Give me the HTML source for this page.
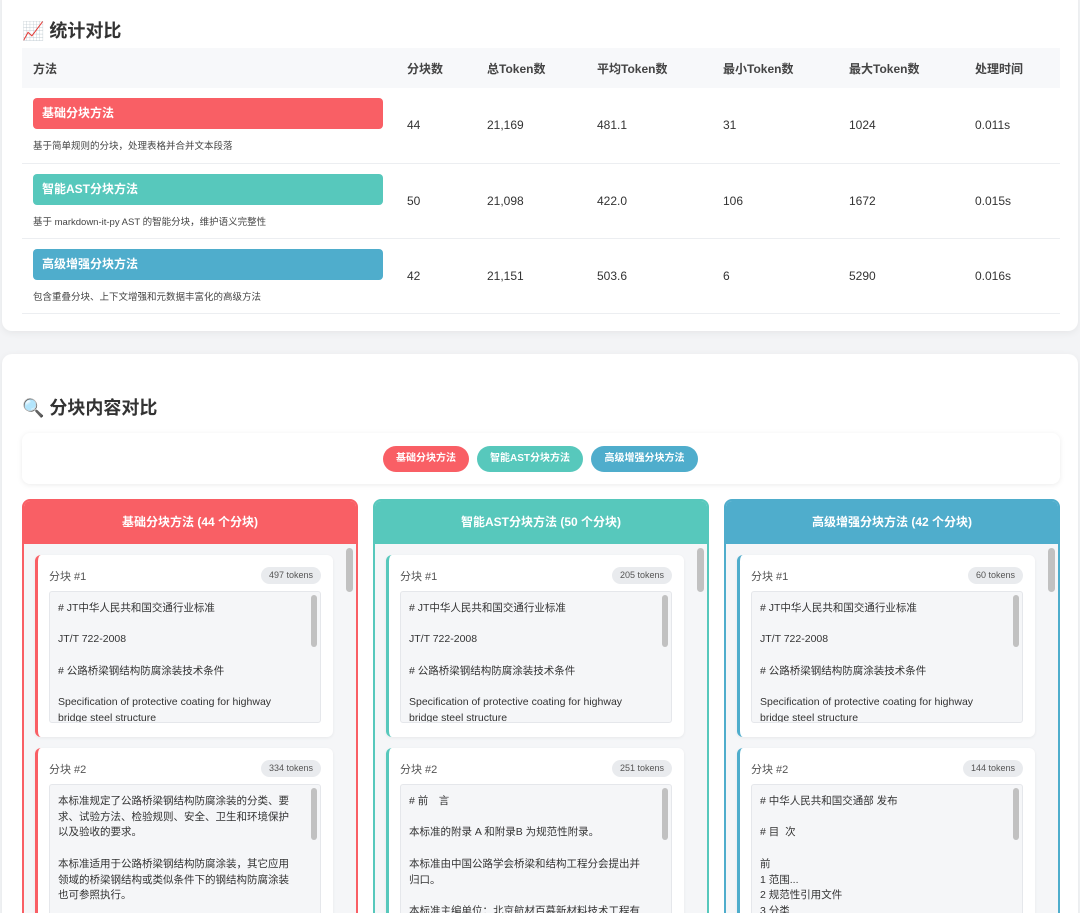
<!DOCTYPE html>
<html><head><meta charset="utf-8"><style>
*{box-sizing:border-box;margin:0;padding:0}
html,body{width:1080px;height:913px;overflow:hidden}
body{background:#f3f4f6;font-family:"Liberation Sans","Noto Sans CJK SC",sans-serif;color:#333;position:relative}
.card{position:absolute;left:2px;width:1076px;background:#fff;border-radius:10px;box-shadow:0 2px 8px rgba(0,0,0,.06)}
h2{position:absolute;left:20px;font-size:18px;font-weight:bold;color:#333}
table{position:absolute;left:20px;top:58px;width:1038px;border-collapse:collapse;font-size:12px}
th{background:#f7f8fa;height:40px;text-align:left;font-weight:bold;color:#444;padding-left:11px}
td{height:75px;border-bottom:1px solid #eceef1;padding-left:11px;color:#333}
td.m{padding-top:10px;vertical-align:top}
.b{width:350px;height:31px;border-radius:4px;color:#fff;font-weight:bold;font-size:12px;line-height:31px;padding-left:9px}
.d{font-size:9.5px;color:#444;margin-top:9px}
.pills{position:absolute;left:20px;top:79px;width:1038px;height:51px;background:#fff;border-radius:8px;box-shadow:0 1px 6px rgba(0,0,0,.08)}
.pill{position:absolute;top:13px;height:26px;border-radius:13px;color:#fff;font-size:10px;font-weight:bold;line-height:26px;text-align:center}
.col{position:absolute;top:145px;width:336px;height:520px;border:2px solid;border-radius:8px;background:#f5f6f8;overflow:hidden}
.ch{height:43px;color:#fff;font-weight:bold;font-size:12px;text-align:center;line-height:43px}
.sb{position:absolute;right:3px;top:47px;width:7px;height:44px;background:#c1c1c1;border-radius:4px}
.k{position:absolute;left:11px;width:298px;height:182px;background:#fff;border-radius:6px;border-left:3px solid;box-shadow:0 1px 3px rgba(0,0,0,.06)}
.kt{position:absolute;left:11px;top:13px;font-size:11px;color:#555}
.tk{position:absolute;right:12px;top:12px;height:17px;padding:0 8px;background:#e9ebee;border-radius:9px;font-size:9px;line-height:17px;color:#555}
.bx{position:absolute;left:11px;top:36px;width:272px;height:132px;background:#f5f6f8;border:1px solid #e5e7eb;border-radius:3px;overflow:hidden;font-size:10.5px;line-height:15.7px;color:#333;padding:9px 22px 0 8px;white-space:pre-wrap}
.bx:after{content:"";position:absolute;right:3px;top:3px;width:6px;height:52px;background:#c1c1c1;border-radius:3px}
</style></head><body>
<div class="card" style="top:-10px;height:341px">
<h2 style="top:27px">📈 统计对比</h2>
<table><tr><th style="width:374px">方法</th><th style="width:80px">分块数</th><th style="width:110px">总Token数</th><th style="width:126px">平均Token数</th><th style="width:126px">最小Token数</th><th style="width:126px">最大Token数</th><th>处理时间</th></tr>
<tr><td class="m"><div class="b" style="background:#f95f65">基础分块方法</div><div class="d">基于简单规则的分块，处理表格并合并文本段落</div></td><td>44</td><td>21,169</td><td>481.1</td><td>31</td><td>1024</td><td>0.011s</td></tr>
<tr><td class="m"><div class="b" style="background:#57c8bc">智能AST分块方法</div><div class="d">基于 markdown-it-py AST 的智能分块，维护语义完整性</div></td><td>50</td><td>21,098</td><td>422.0</td><td>106</td><td>1672</td><td>0.015s</td></tr>
<tr><td class="m"><div class="b" style="background:#4fadcc">高级增强分块方法</div><div class="d">包含重叠分块、上下文增强和元数据丰富化的高级方法</div></td><td>42</td><td>21,151</td><td>503.6</td><td>6</td><td>5290</td><td>0.016s</td></tr>
</table></div>
<div class="card" style="top:354px;height:700px">
<h2 style="top:40px">🔍 分块内容对比</h2>
<div class="pills">
<div class="pill" style="left:361px;width:86px;background:#f95f65">基础分块方法</div>
<div class="pill" style="left:455px;width:106px;background:#57c8bc">智能AST分块方法</div>
<div class="pill" style="left:569px;width:107px;background:#4fadcc">高级增强分块方法</div>
</div>
<div class="col" style="left:20px;border-color:#f95f65"><div class="ch" style="background:#f95f65">基础分块方法 (44 个分块)</div><div class="sb"></div>
<div class="k" style="top:54px;border-color:#f95f65"><div class="kt">分块 #1</div><div class="tk">497 tokens</div><div class="bx"># JT中华人民共和国交通行业标准

JT/T 722-2008

# 公路桥梁钢结构防腐涂装技术条件

Specification of protective coating for highway bridge steel structure</div></div>
<div class="k" style="top:247px;border-color:#f95f65;height:240px"><div class="kt">分块 #2</div><div class="tk">334 tokens</div><div class="bx" style="height:190px">本标准规定了公路桥梁钢结构防腐涂装的分类、要求、试验方法、检验规则、安全、卫生和环境保护以及验收的要求。

本标准适用于公路桥梁钢结构防腐涂装，其它应用领域的桥梁钢结构或类似条件下的钢结构防腐涂装也可参照执行。</div></div></div>
<div class="col" style="left:371px;border-color:#57c8bc"><div class="ch" style="background:#57c8bc">智能AST分块方法 (50 个分块)</div><div class="sb"></div>
<div class="k" style="top:54px;border-color:#57c8bc"><div class="kt">分块 #1</div><div class="tk">205 tokens</div><div class="bx"># JT中华人民共和国交通行业标准

JT/T 722-2008

# 公路桥梁钢结构防腐涂装技术条件

Specification of protective coating for highway bridge steel structure</div></div>
<div class="k" style="top:247px;border-color:#57c8bc;height:240px"><div class="kt">分块 #2</div><div class="tk">251 tokens</div><div class="bx" style="height:190px"># 前　言

本标准的附录 A 和附录B 为规范性附录。

本标准由中国公路学会桥梁和结构工程分会提出并归口。

本标准主编单位：北京航材百慕新材料技术工程有限</div></div></div>
<div class="col" style="left:722px;border-color:#4fadcc"><div class="ch" style="background:#4fadcc">高级增强分块方法 (42 个分块)</div><div class="sb"></div>
<div class="k" style="top:54px;border-color:#4fadcc"><div class="kt">分块 #1</div><div class="tk">60 tokens</div><div class="bx"># JT中华人民共和国交通行业标准

JT/T 722-2008

# 公路桥梁钢结构防腐涂装技术条件

Specification of protective coating for highway bridge steel structure</div></div>
<div class="k" style="top:247px;border-color:#4fadcc;height:240px"><div class="kt">分块 #2</div><div class="tk">144 tokens</div><div class="bx" style="height:190px"># 中华人民共和国交通部 发布

# 目  次

前
1 范围...
2 规范性引用文件
3 分类</div></div></div>
</div>
</body></html>
